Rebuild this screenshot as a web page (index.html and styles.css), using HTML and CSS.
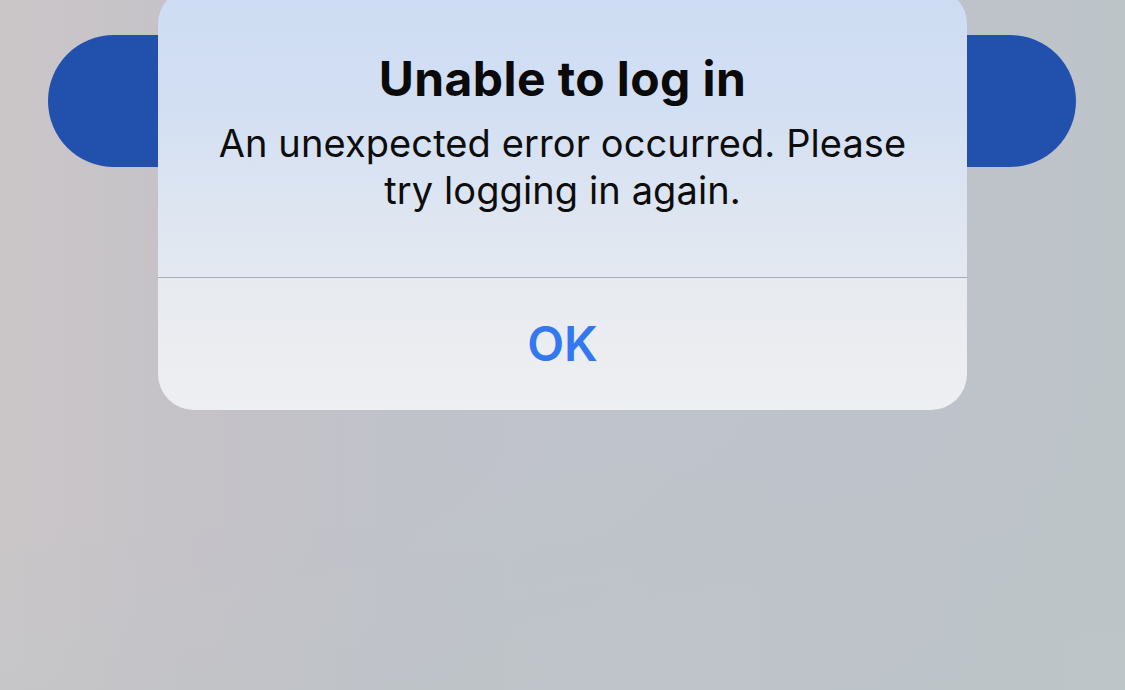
FILE: index.html
```html
<!DOCTYPE html>
<html>
<head>
<meta charset="utf-8">
<link rel="stylesheet" href="styles.css">
</head>
<body>
<div class="screen">
  <div class="pill"></div>
  <div class="alert">
    <div class="alert-body">
      <div class="title">Unable to log in</div>
      <div class="message">An unexpected error occurred. Please<br>try logging in again.</div>
    </div>
    <div class="divider"></div>
    <div class="actions">
      <div class="ok">OK</div>
    </div>
  </div>
</div>
</body>
</html>
```

FILE: styles.css
```css
html, body {
  margin: 0;
  padding: 0;
  overflow: hidden;
}
.screen {
  position: relative;
  width: 1125px;
  height: 690px;
  overflow: hidden;
  font-family: Inter, "Noto Sans", sans-serif;
  background:
    linear-gradient(170deg, rgba(255,255,255,0) 60%, rgba(188,197,198,0.6) 100%),
    linear-gradient(90deg, #cac6c8 0%, #c5c2c8 18%, #c0c2ca 35%, #bfc3cb 55%, #bec2cb 80%, #bdc4c8 100%);
  padding-top: 35px;
  box-sizing: border-box;
}
.pill {
  margin-left: 48px;
  width: 1028px;
  height: 132px;
  border-radius: 66px;
  background: #2150ad;
}
.alert {
  position: absolute;
  left: 158px;
  top: -12px;
  width: 809px;
  height: 422px;
  border-radius: 36px;
  overflow: hidden;
  display: flex;
  flex-direction: column;
}
.alert-body {
  height: 289px;
  box-sizing: border-box;
  padding-top: 62px;
  text-align: center;
  background: linear-gradient(180deg, #cedcf3 0%, #d2dff3 40%, #dde5f1 75%, #e4e9f1 100%);
}
.title {
  font-size: 48px;
  line-height: 58px;
  font-weight: 700;
  color: #0a0a0a;
  letter-spacing: 0.4px;
}
.message {
  margin-top: 12px;
  font-size: 38px;
  line-height: 47px;
  font-weight: 400;
  color: #0d0d0d;
  letter-spacing: 0.1px;
}
.divider {
  height: 1px;
  background: #a8acb4;
}
.actions {
  flex: 1;
  display: flex;
  align-items: center;
  justify-content: center;
  background: linear-gradient(180deg, #e7eaef 0%, #ebedf1 60%, #eeeff2 100%);
}
.ok {
  font-size: 48px;
  font-weight: 600;
  color: #3478f1;
  line-height: 58px;
}
```
